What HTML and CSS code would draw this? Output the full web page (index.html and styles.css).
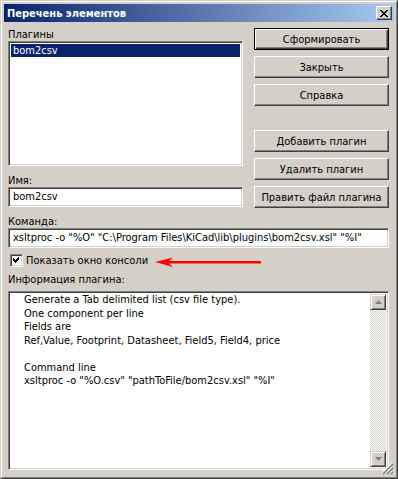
FILE: index.html
```html
<!DOCTYPE html>
<html lang="ru">
<head>
  <meta charset="UTF-8" />
  <title>Перечень элементов</title>
  <link rel="stylesheet" href="styles.css">
</head>
<body>
  <div class="window">
    <div class="frame">
      <div class="titlebar">
        <span class="title">Перечень элементов</span>
        <div class="close">
          <svg width="8" height="7" viewBox="0 0 8 7">
            <path d="M0 0h2v1h-2zM6 0h2v1h-2zM1 1h2v1h-2zM5 1h2v1h-2zM2 2h4v1h-4zM3 3h2v1h-2zM2 4h4v1h-4zM1 5h2v1h-2zM5 5h2v1h-2zM0 6h2v1h-2zM6 6h2v1h-2z" fill="#000"/>
          </svg>
        </div>
      </div>

      <div class="client">
        <div class="top">
          <div class="left">
            <div class="label">Плагины</div>
            <div class="listbox">
              <div class="item selected">bom2csv</div>
            </div>
            <div class="label name-label">Имя:</div>
            <div class="field">bom2csv</div>
          </div>
          <div class="buttons">
            <div class="btn default">Сформировать</div>
            <div class="btn">Закрыть</div>
            <div class="btn">Справка</div>
            <div class="btn group">Добавить плагин</div>
            <div class="btn">Удалить плагин</div>
            <div class="btn">Править файл плагина</div>
          </div>
        </div>

        <div class="label cmd-label">Команда:</div>
        <div class="field">xsltproc -o "%O" "C:\Program Files\KiCad\lib\plugins\bom2csv.xsl" "%I"</div>

        <div class="check-row">
          <span class="checkbox">
            <svg width="7" height="7" viewBox="0 0 7 7">
              <path d="M6 0v3h-1v1h-1v1h-1v1h-1v-1h-1v-1h-1v-3h1v1h1v1h1v-1h1v-1h1v-1z" fill="#000"/>
            </svg>
          </span>
          <span class="check-label">Показать окно консоли</span>
          <svg class="arrow" width="106" height="12" viewBox="0 0 106 12">
            <path d="M0 6L18 1.5L14 5H106V7.5H14L18 11Z" fill="#ff0000"/>
          </svg>
        </div>

        <div class="label info-label">Информация плагина:</div>
        <div class="info">
          <div class="info-text">Generate a Tab delimited list (csv file type).
One component per line
Fields are
Ref,Value, Footprint, Datasheet, Field5, Field4, price

Command line
xsltproc -o "%O.csv" "pathToFile/bom2csv.xsl" "%I"</div>
          <div class="scrollbar">
            <div class="sb-btn">
              <svg width="7" height="4" viewBox="0 0 7 4"><path d="M3.5 0L7 4H0Z" fill="#808080"/></svg>
            </div>
            <div class="sb-track"></div>
            <div class="sb-btn">
              <svg width="7" height="4" viewBox="0 0 7 4"><path d="M0 0H7L3.5 4Z" fill="#808080"/></svg>
            </div>
          </div>
        </div>
      </div>
    </div>
    <svg class="grip" width="12" height="12" viewBox="0 0 12 12">
      <path d="M11 1L1 11M11 5L5 11M11 9L9 11" stroke="#808080" stroke-width="1.5"/>
      <path d="M10 0L0 10M10 4L4 10M10 8L8 10" stroke="#fff" stroke-width="1"/>
    </svg>
  </div>
</body>
</html>
```

FILE: styles.css
```css
body {
  margin: 0;
  background: #d4d0c8;
  font-family: "DejaVu Sans", sans-serif;
  font-stretch: condensed;
  font-size: 11px;
  color: #000;
}
.window {
  position: relative;
  width: 398px;
  height: 479px;
  box-sizing: border-box;
  border: 1px solid;
  border-color: #d4d0c8 #404040 #404040 #d4d0c8;
}
.frame {
  height: 100%;
  box-sizing: border-box;
  border: 1px solid;
  border-color: #fff #808080 #808080 #fff;
  padding: 2px;
  display: flex;
  flex-direction: column;
}
.titlebar {
  height: 18px;
  display: flex;
  align-items: center;
  justify-content: space-between;
  padding: 0 2px 0 3px;
  background: linear-gradient(to right, #0a246a, #a6caf0);
}
.title {
  color: #fff;
  font-weight: bold;
}
.close {
  width: 16px;
  height: 14px;
  box-sizing: border-box;
  border: 1px solid;
  border-color: #fff #404040 #404040 #fff;
  box-shadow: inset -1px -1px #808080;
  background: #d4d0c8;
  display: flex;
  align-items: center;
  justify-content: center;
}
.client {
  flex: 1;
  padding: 6px 5px 0 4px;
}
.top {
  display: flex;
  gap: 11px;
}
.left {
  width: 235px;
}
.buttons {
  flex: 1;
  display: flex;
  flex-direction: column;
  gap: 6px;
}
.label {
  height: 13px;
  line-height: 13px;
}
.name-label {
  margin-top: 8px;
}
.cmd-label {
  margin-top: 7px;
}
.info-label {
  margin-top: 5px;
}
.listbox, .field, .info, .checkbox {
  box-sizing: border-box;
  background: #fff;
  border: 1px solid;
  border-color: #808080 #fff #fff #808080;
  box-shadow: inset 1px 1px #404040, inset -1px -1px #d4d0c8;
}
.listbox {
  height: 125px;
  padding: 2px;
}
.item {
  height: 13px;
  line-height: 13px;
  padding-left: 2px;
}
.item.selected {
  background: #0a246a;
  color: #fff;
}
.field {
  height: 20px;
  line-height: 18px;
  padding: 0 4px;
  white-space: nowrap;
  overflow: hidden;
}
.btn {
  height: 22px;
  box-sizing: border-box;
  border: 1px solid;
  border-color: #fff #404040 #404040 #fff;
  box-shadow: inset -1px -1px #808080;
  display: flex;
  align-items: center;
  justify-content: center;
}
.btn.default {
  border-color: #000;
  box-shadow: inset 1px 1px #fff, inset -1px -1px #404040, inset -2px -2px #808080;
}
.btn.group {
  margin-top: 18px;
}
.check-row {
  margin-top: 5px;
  height: 15px;
  display: flex;
  align-items: center;
  padding-left: 2px;
}
.checkbox {
  width: 13px;
  height: 13px;
  display: flex;
  align-items: center;
  justify-content: center;
}
.check-label {
  margin-left: 3px;
}
.arrow {
  margin-left: 7px;
  margin-top: 2px;
}
.info {
  margin-top: 5px;
  height: 179px;
  display: flex;
  padding: 2px;
}
.info-text {
  flex: 1;
  padding: 0 0 0 13px;
  margin-top: -1px;
  line-height: 13.5px;
  white-space: pre;
  overflow: hidden;
}
.scrollbar {
  width: 16px;
  display: flex;
  flex-direction: column;
}
.sb-btn {
  height: 16px;
  box-sizing: border-box;
  border: 1px solid;
  border-color: #d4d0c8 #404040 #404040 #d4d0c8;
  box-shadow: inset 1px 1px #fff, inset -1px -1px #808080;
  background: #d4d0c8;
  display: flex;
  align-items: center;
  justify-content: center;
}
.sb-track {
  flex: 1;
  background: repeating-conic-gradient(#fff 0 25%, #d4d0c8 0 50%) 0 0 / 2px 2px;
}
.grip {
  position: absolute;
  right: 3px;
  bottom: 3px;
}
```
